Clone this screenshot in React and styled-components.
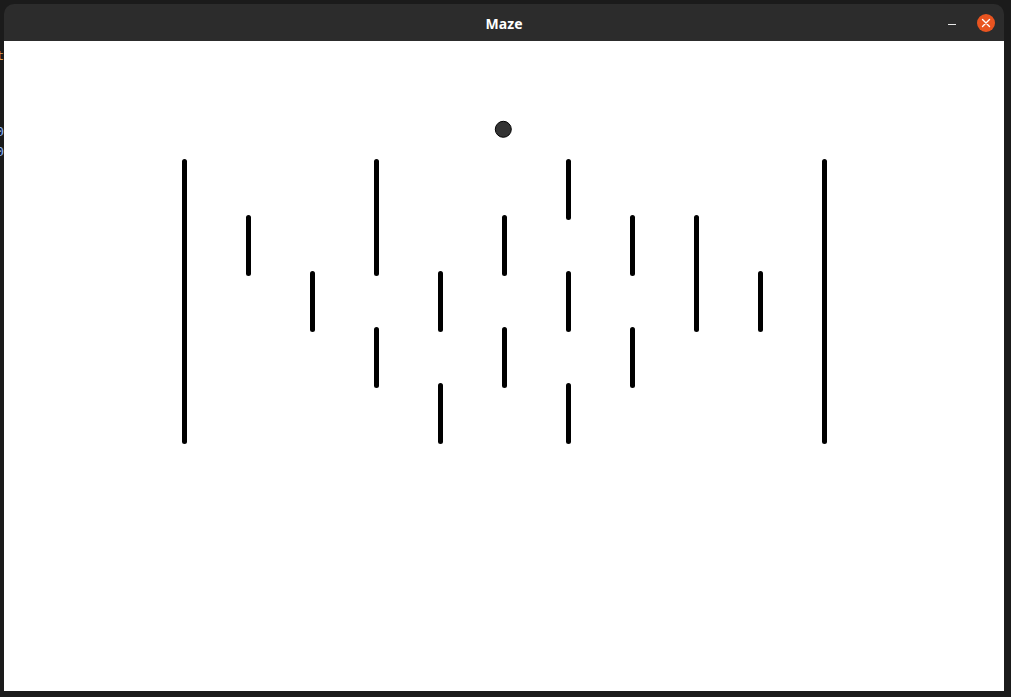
import React from "react";
import styled, { createGlobalStyle } from "styled-components";

const Global = createGlobalStyle`
  html, body { margin: 0; padding: 0; background: #1b1b1b; overflow: hidden; }
  body { width: 1011px; height: 697px; font-family: "Noto Sans", "Open Sans", sans-serif; }
`;

const Desktop = styled.div`
  display: flex;
  width: 1011px;
  height: 697px;
  background: #1b1b1b;
`;

const Peek = styled.div`
  width: 4px;
  overflow: hidden;
  display: flex;
  flex-direction: column;
  align-items: flex-end;
  padding-top: 46px;
  font-family: "DejaVu Sans Mono", monospace;
  font-size: 13px;
  line-height: 19px;
`;

const PeekLine = styled.div`
  white-space: nowrap;
  color: ${(p) => p.$color};
  height: ${(p) => p.$h}px;
`;

const Window = styled.div`
  margin-top: 4px;
  width: 1000px;
  display: flex;
  flex-direction: column;
  border-radius: 10px 10px 0 0;
  overflow: hidden;
  align-self: flex-start;
`;

const TitleBar = styled.div`
  height: 37px;
  background: #2c2c2c;
  display: grid;
  grid-template-columns: 1fr auto 1fr;
  align-items: center;
`;

const Title = styled.div`
  grid-column: 2;
  color: #ffffff;
  font-weight: 700;
  font-size: 14px;
  letter-spacing: 0.1px;
  padding-top: 1px;
`;

const Controls = styled.div`
  grid-column: 3;
  display: flex;
  justify-content: flex-end;
  align-items: center;
  gap: 21px;
  padding-right: 9px;
`;

const Minimize = styled.div`
  width: 8px;
  height: 1px;
  background: #e8e8e8;
  margin-top: 4px;
`;

const Close = styled.div`
  width: 18px;
  height: 18px;
  border-radius: 50%;
  background: #e95420;
  display: flex;
  align-items: center;
  justify-content: center;
`;

const Canvas = styled.div`
  height: 650px;
  background: #ffffff;
`;

// columns (index) and row spans (start level, end level)
const walls = [
  [0, 0, 5],
  [1, 1, 2],
  [2, 2, 3],
  [3, 0, 2],
  [3, 3, 4],
  [4, 2, 3],
  [4, 4, 5],
  [5, 1, 2],
  [5, 3, 4],
  [6, 0, 1],
  [6, 2, 3],
  [6, 4, 5],
  [7, 1, 2],
  [7, 3, 4],
  [8, 1, 3],
  [9, 2, 3],
  [10, 0, 5],
];

function Maze() {
  // SVG coordinates are page coordinates shifted by canvas origin (4, 41)
  const ox = 4;
  const oy = 41;
  const colX = (c) => 184.5 + c * 64 - ox;
  const rowY = (r) => 161.5 + r * 56 - oy;
  return (
    <svg width="1000" height="650" viewBox="0 0 1000 650">
      {walls.map(([c, r1, r2], i) => (
        <line
          key={i}
          x1={colX(c)}
          y1={rowY(r1)}
          x2={colX(c)}
          y2={rowY(r2)}
          stroke="#000"
          strokeWidth="5"
          strokeLinecap="round"
        />
      ))}
      <circle cx={503.3 - ox} cy={129.3 - oy} r="8" fill="#333333" stroke="#000" strokeWidth="1" />
    </svg>
  );
}

export default function App() {
  return (
    <>
      <Global />
      <Desktop>
        <Peek>
          <PeekLine $color="#e0a050" $h={76}>st</PeekLine>
          <PeekLine $color="#8ab4f8" $h={20}>10</PeekLine>
          <PeekLine $color="#8ab4f8" $h={20}>10</PeekLine>
        </Peek>
        <Window>
          <TitleBar>
            <Title>Maze</Title>
            <Controls>
              <Minimize />
              <Close>
                <svg width="10" height="10" viewBox="0 0 10 10">
                  <path d="M1.5 1.5 L8.5 8.5 M8.5 1.5 L1.5 8.5" stroke="#fff" strokeWidth="1.4" strokeLinecap="round" />
                </svg>
              </Close>
            </Controls>
          </TitleBar>
          <Canvas>
            <Maze />
          </Canvas>
        </Window>
      </Desktop>
    </>
  );
}
